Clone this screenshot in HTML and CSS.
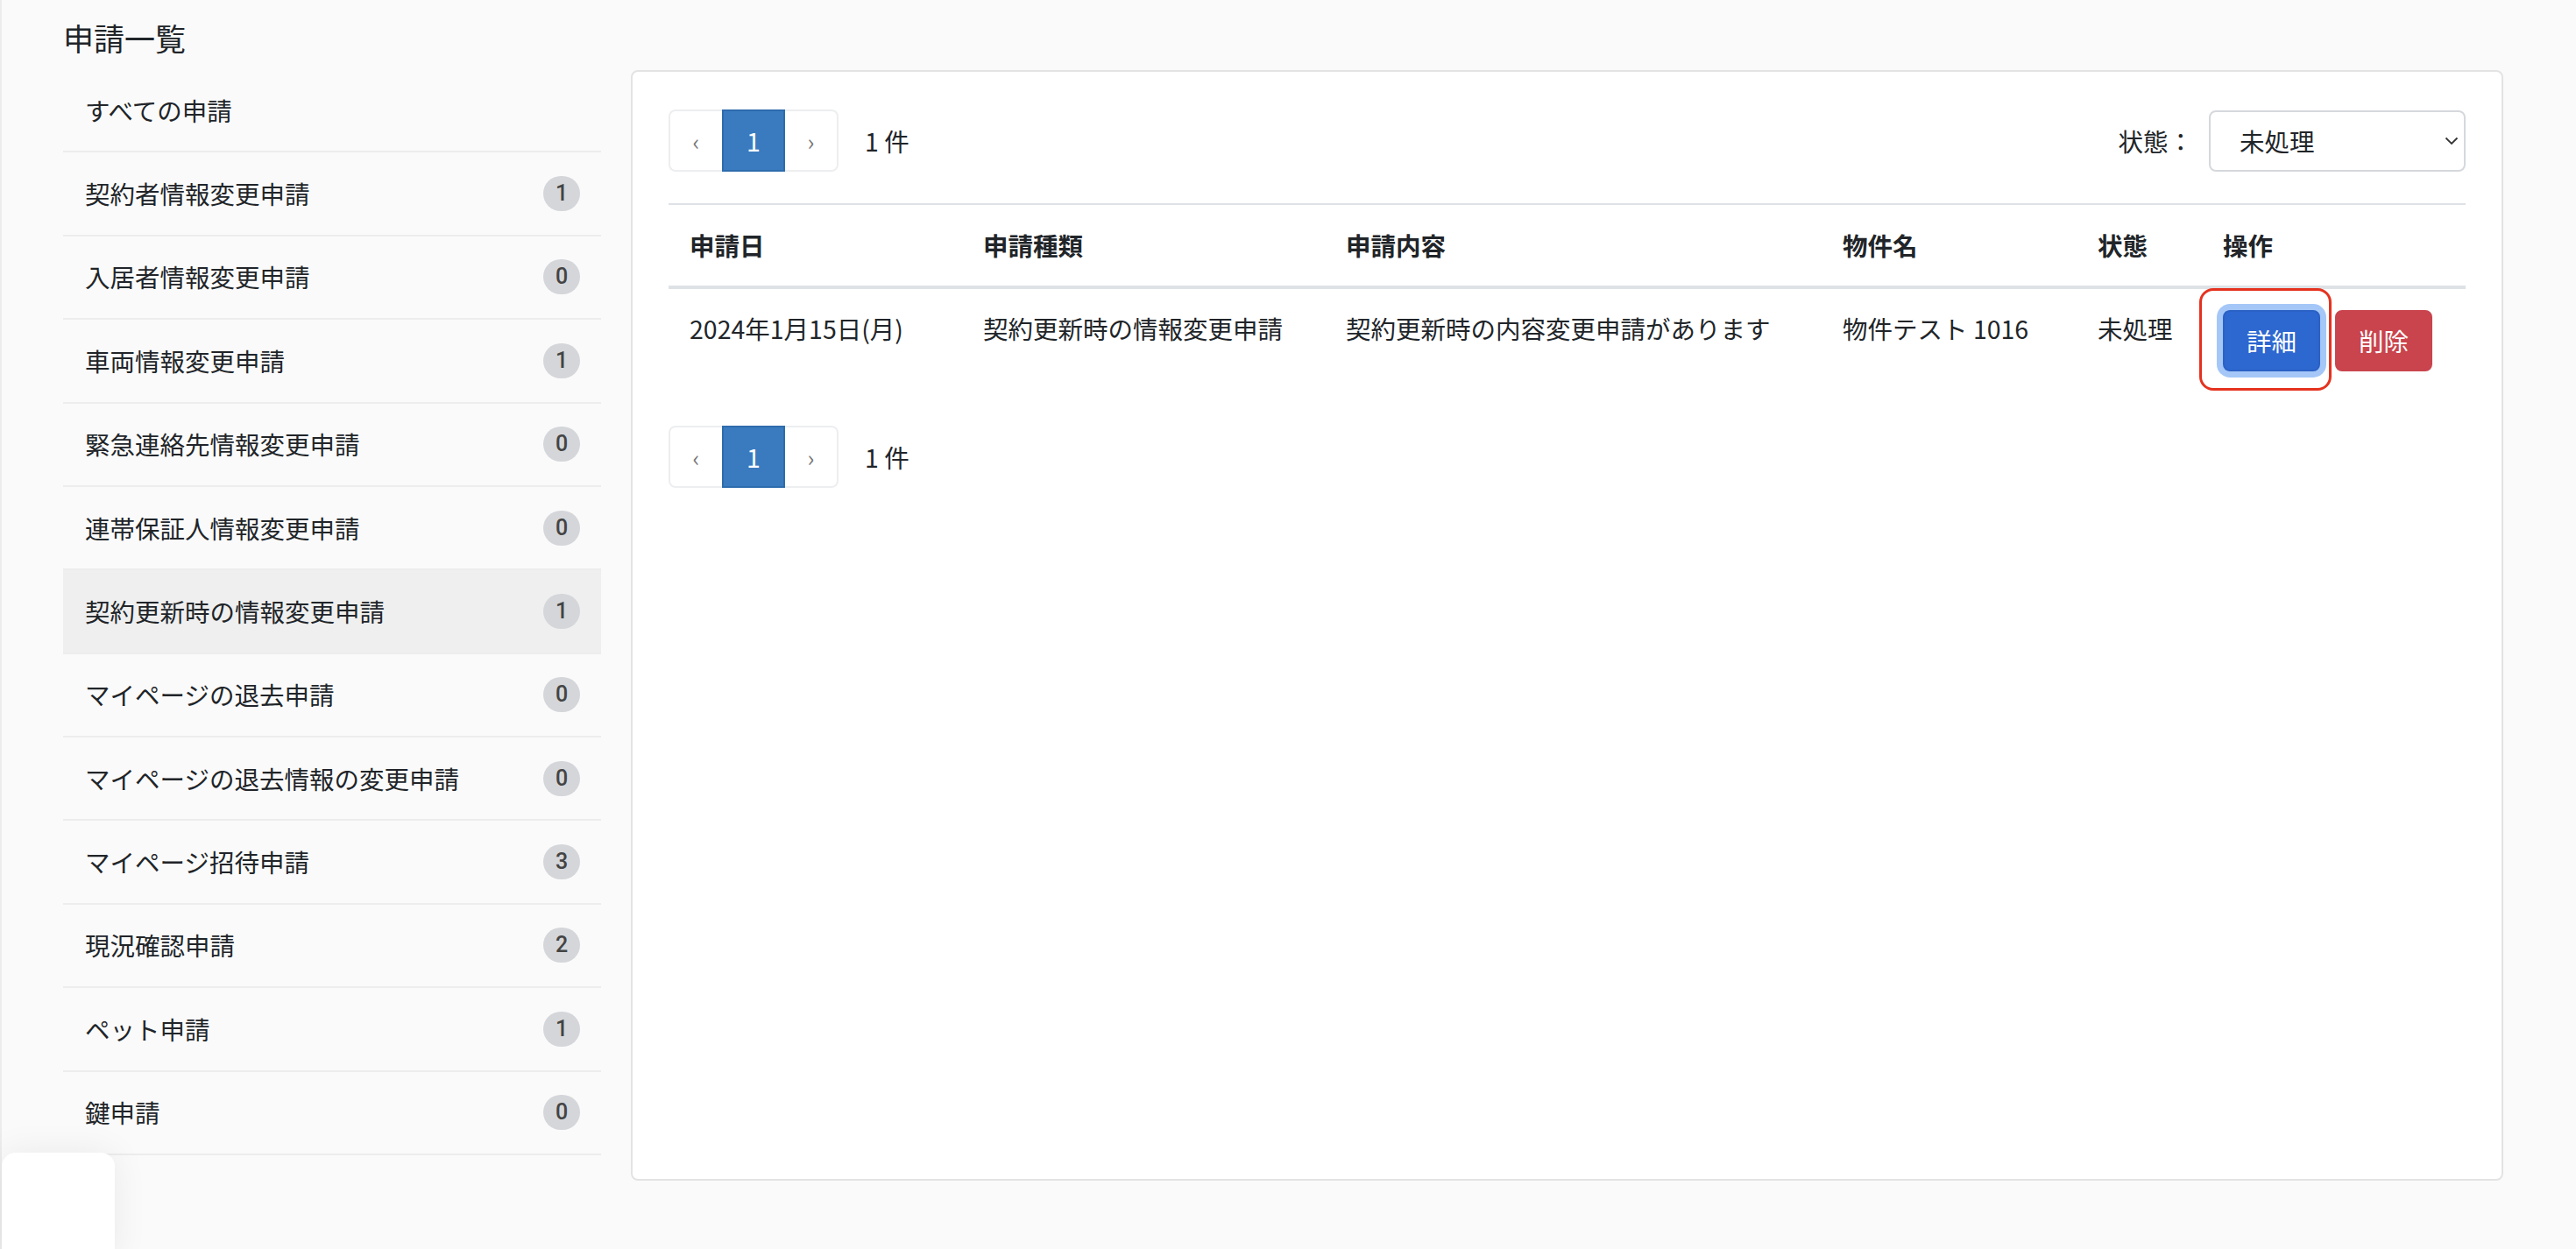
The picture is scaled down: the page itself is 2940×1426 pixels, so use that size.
FILE: index.html
```html
<!DOCTYPE html>
<html lang="ja">
<head>
    <meta charset="UTF-8">
    <meta name="viewport" content="width=device-width, initial-scale=1.0">
    <title>申請一覧</title>
    <link rel="stylesheet" href="styles.css">
</head>
<body>

<div class="page">
    <h1 class="page-title">申請一覧</h1>

    <div class="layout">
        <!-- 申請種別メニュー -->
        <ul class="side-list">
            <li class="side-item"><span>すべての申請</span></li>
            <li class="side-item"><span>契約者情報変更申請</span><span class="badge">1</span></li>
            <li class="side-item"><span>入居者情報変更申請</span><span class="badge">0</span></li>
            <li class="side-item"><span>車両情報変更申請</span><span class="badge">1</span></li>
            <li class="side-item"><span>緊急連絡先情報変更申請</span><span class="badge">0</span></li>
            <li class="side-item"><span>連帯保証人情報変更申請</span><span class="badge">0</span></li>
            <li class="side-item active"><span>契約更新時の情報変更申請</span><span class="badge">1</span></li>
            <li class="side-item"><span>マイページの退去申請</span><span class="badge">0</span></li>
            <li class="side-item"><span>マイページの退去情報の変更申請</span><span class="badge">0</span></li>
            <li class="side-item"><span>マイページ招待申請</span><span class="badge">3</span></li>
            <li class="side-item"><span>現況確認申請</span><span class="badge">2</span></li>
            <li class="side-item"><span>ペット申請</span><span class="badge">1</span></li>
            <li class="side-item"><span>鍵申請</span><span class="badge">0</span></li>
        </ul>

        <!-- 申請リスト -->
        <div class="card">
            <div class="toolbar">
                <div class="pager-wrap">
                    <ul class="pager">
                        <li class="pager-prev">&lsaquo;</li>
                        <li class="pager-num active">1</li>
                        <li class="pager-next">&rsaquo;</li>
                    </ul>
                    <span class="count">1 件</span>
                </div>
                <div class="filter">
                    <label for="status">状態：</label>
                    <div class="select-box">
                        <select id="status">
                            <option>未処理</option>
                            <option>処理済</option>
                            <option>すべて</option>
                        </select>
                        <svg class="select-arrow" width="16" height="10" viewBox="0 0 16 10">
                            <path d="M1.5 1.5 L8 8 L14.5 1.5" fill="none" stroke="#333" stroke-width="1.8"/>
                        </svg>
                    </div>
                </div>
            </div>

            <table class="apps">
                <thead>
                    <tr>
                        <th class="col-date">申請日</th>
                        <th class="col-type">申請種類</th>
                        <th class="col-body">申請内容</th>
                        <th class="col-prop">物件名</th>
                        <th class="col-state">状態</th>
                        <th>操作</th>
                    </tr>
                </thead>
                <tbody>
                    <tr>
                        <td>2024年1月15日(月)</td>
                        <td>契約更新時の情報変更申請</td>
                        <td>契約更新時の内容変更申請があります</td>
                        <td>物件テスト 1016</td>
                        <td>未処理</td>
                        <td>
                            <div class="ops">
                                <button class="btn btn-primary">詳細</button>
                                <button class="btn btn-danger">削除</button>
                            </div>
                        </td>
                    </tr>
                </tbody>
            </table>

            <div class="pager-wrap bottom">
                <ul class="pager">
                    <li class="pager-prev">&lsaquo;</li>
                    <li class="pager-num active">1</li>
                    <li class="pager-next">&rsaquo;</li>
                </ul>
                <span class="count">1 件</span>
            </div>
        </div>
    </div>
</div>

<!-- チャットウィジェット -->
<div class="chat-widget"></div>

</body>
</html>
```

FILE: styles.css
```css
body { margin: 0; min-height: 100vh; background: #fafafa; color: #212529; font-family: "Noto Sans CJK JP", "Noto Sans", sans-serif; font-size: 28.5px; box-shadow: inset 2px 0 0 #ececec; }
.page { padding: 22px 83px 0 72px; }
.page-title { margin: 0 0 16px; font-size: 35px; font-weight: normal; line-height: 41px; }
.layout { display: flex; align-items: flex-start; gap: 34px; }

/* side menu */
.side-list { width: 614px; margin: 0; padding: 0; list-style: none; flex-shrink: 0; }
.side-item { display: flex; justify-content: space-between; align-items: center; padding: 25.7px 24px 25.7px 25px; line-height: 42px; border-bottom: 2px solid #ededed; }
.side-item.active { background: #efefef; }
.badge { display: inline-flex; align-items: center; justify-content: center; min-width: 42px; height: 40px; border-radius: 20px; background: #d4d6da; color: #444; font-family: Roboto, "Noto Sans", sans-serif; font-weight: 500; font-size: 25px; }

/* card */
.card { flex: 1; height: 1268px; box-sizing: border-box; margin-top: 1px; padding: 43px 41px; background: #fff; border: 2px solid #e3e3e3; border-radius: 8px; }
.toolbar { display: flex; justify-content: space-between; align-items: center; margin-bottom: 36px; }
.pager-wrap { display: flex; align-items: center; }
.pager-wrap.bottom { margin-top: 38px; }
.pager { display: flex; margin: 0; padding: 0; list-style: none; }
.pager li { display: flex; align-items: center; justify-content: center; height: 71px; box-sizing: border-box; border: 2px solid #eceef0; }
.pager-prev, .pager-next { width: 61px; color: #777; font-size: 26px; }
.pager-prev { border-right: none !important; border-radius: 8px 0 0 8px; }
.pager-next { border-left: none !important; border-radius: 0 8px 8px 0; }
.pager-num { width: 72px; }
.pager-num.active { background: #3a7bbf; border-color: #2d6cad !important; color: #fff; }
.count { margin-left: 30px; }

.filter { display: flex; align-items: center; }
.filter label { margin-right: 18px; }
.select-box { position: relative; width: 293px; }
.select-box select { width: 100%; height: 70px; padding: 0 33px; appearance: none; -webkit-appearance: none; background: #fff; border: 2px solid #d5d8dc; border-radius: 8px; color: #212529; font: inherit; }
.select-arrow { position: absolute; right: 8px; top: 30px; pointer-events: none; }

/* table */
.apps { width: 100%; border-collapse: collapse; table-layout: fixed; }
.apps th { padding: 25px 24px; text-align: left; font-weight: bold; line-height: 42px; white-space: nowrap; border-top: 2px solid #dee2e6; border-bottom: 4px solid #dee2e6; }
.apps td { padding: 24px; line-height: 42px; vertical-align: top; white-space: nowrap; }
.col-date { width: 287px; }
.col-type { width: 366px; }
.col-body { width: 519px; }
.col-prop { width: 243px; }
.col-state { width: 95px; }

.ops { display: flex; }
.btn { padding: 12px 25px; border: 2px solid transparent; border-radius: 8px; color: #fff; font: inherit; line-height: 42px; cursor: pointer; }
.btn-primary { position: relative; background: #2d67d0; border-color: #2a61c5; box-shadow: 0 0 0 7px #a4c7f8; }
.btn-primary::after { content: ""; position: absolute; top: -27px; left: -29px; right: -15px; bottom: -24px; border: 3.5px solid #e5321f; border-radius: 16px; }
.btn-danger { margin-left: 17px; background: #c9444d; border-color: #c9444d; }

.chat-widget { position: fixed; left: 2px; bottom: -16px; width: 129px; height: 126px; background: #fff; border-radius: 16px; box-shadow: 0 0 40px rgba(0, 0, 0, 0.07); }
```
